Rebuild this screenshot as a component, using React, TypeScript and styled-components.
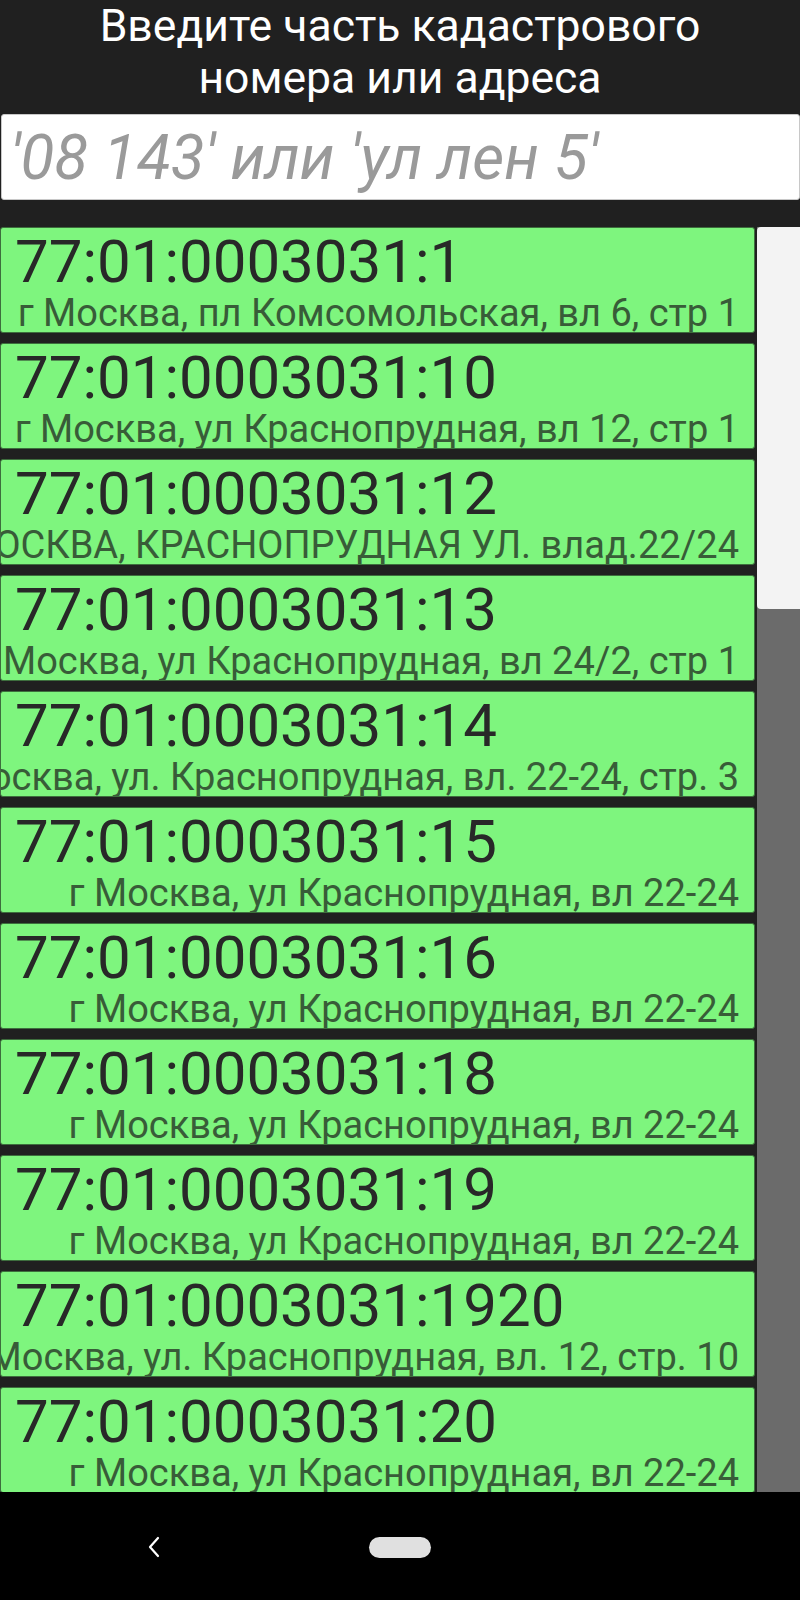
import React from "react";
import styled, { createGlobalStyle } from "styled-components";

const GlobalStyle = createGlobalStyle`
  html, body {
    margin: 0;
    padding: 0;
    background: #202020;
  }
  * { box-sizing: border-box; }
`;

const Screen = styled.div`
  width: 800px;
  height: 1600px;
  display: flex;
  flex-direction: column;
  background: #202020;
  font-family: Roboto, "Liberation Sans", sans-serif;
  overflow: hidden;
`;

const Title = styled.h1`
  margin: 0;
  padding: 0;
  height: 104px;
  color: #ffffff;
  font-weight: 400;
  font-size: 44.5px;
  line-height: 52px;
  text-align: center;
`;

const SearchBox = styled.input`
  margin: 10px 0 0 1px;
  width: 799px;
  height: 86px;
  border: 1px solid #c8c8c8;
  border-radius: 3px;
  background: #ffffff;
  padding: 0 8px;
  font-family: Roboto, "Liberation Sans", sans-serif;
  font-size: 62px;
  font-style: italic;
  color: #222;
  outline: none;
  &::placeholder {
    color: #9a9a9a;
    font-style: italic;
  }
`;

const ListArea = styled.div`
  margin-top: 27px;
  flex: 1;
  display: flex;
  gap: 2px;
  min-height: 0;
`;

const Cards = styled.div`
  width: 755px;
  display: flex;
  flex-direction: column;
  gap: 10px;
  overflow: hidden;
`;

const Card = styled.div`
  flex: 0 0 106px;
  height: 106px;
  background: #7ef57e;
  border: 1px solid #3d6e3d;
  border-radius: 3px;
  overflow: hidden;
  display: flex;
  flex-direction: column;
  padding-top: 2px;
`;

const Number = styled.div`
  padding-left: 14px;
  font-size: 60px;
  line-height: 64px;
  color: #282828;
  white-space: nowrap;
`;

const Address = styled.div`
  display: flex;
  justify-content: flex-end;
  padding-right: 15px;
  font-size: 38px;
  line-height: 38px;
  color: #385c38;
  white-space: nowrap;
`;

const Scrollbar = styled.div`
  width: 43px;
  background: #6b6b6b;
  display: flex;
  flex-direction: column;
`;

const Thumb = styled.div`
  height: 382px;
  background: #f3f3f3;
  border-radius: 4px 0 0 4px;
`;

const NavBar = styled.div`
  flex: 0 0 108px;
  height: 108px;
  background: #000000;
  position: relative;
  display: flex;
  align-items: center;
  justify-content: center;
`;

const BackButton = styled.div`
  position: absolute;
  left: 146px;
  top: 44px;
  width: 16px;
  height: 22px;
`;

const HomePill = styled.div`
  width: 62px;
  height: 21px;
  border-radius: 11px;
  background: #e0e0e0;
  margin-top: 2px;
`;

const items: [string, string][] = [
  ["77:01:0003031:1", "г Москва, пл Комсомольская, вл 6, стр 1"],
  ["77:01:0003031:10", "г Москва, ул Краснопрудная, вл 12, стр 1"],
  ["77:01:0003031:12", "г. МОСКВА, КРАСНОПРУДНАЯ УЛ. влад.22/24"],
  ["77:01:0003031:13", "Москва, ул Краснопрудная, вл 24/2, стр 1"],
  ["77:01:0003031:14", "г. Москва, ул. Краснопрудная, вл. 22-24, стр. 3"],
  ["77:01:0003031:15", "г Москва, ул Краснопрудная, вл 22-24"],
  ["77:01:0003031:16", "г Москва, ул Краснопрудная, вл 22-24"],
  ["77:01:0003031:18", "г Москва, ул Краснопрудная, вл 22-24"],
  ["77:01:0003031:19", "г Москва, ул Краснопрудная, вл 22-24"],
  ["77:01:0003031:1920", "г. Москва, ул. Краснопрудная, вл. 12, стр. 10"],
  ["77:01:0003031:20", "г Москва, ул Краснопрудная, вл 22-24"],
];

export default function App() {
  return (
    <>
      <GlobalStyle />
      <Screen>
        <Title>
          Введите часть кадастрового
          <br />
          номера или адреса
        </Title>
        <SearchBox placeholder="'08 143' или 'ул лен 5'" />
        <ListArea>
          <Cards>
            {items.map(([num, addr]) => (
              <Card key={num}>
                <Number>{num}</Number>
                <Address>
                  <span>{addr}</span>
                </Address>
              </Card>
            ))}
          </Cards>
          <Scrollbar>
            <Thumb />
          </Scrollbar>
        </ListArea>
        <NavBar>
          <BackButton>
            <svg width="16" height="22" viewBox="0 0 16 22">
              <polyline
                points="12,2 4,11 12,20"
                fill="none"
                stroke="#ffffff"
                strokeWidth="2.2"
                strokeLinecap="round"
                strokeLinejoin="round"
              />
            </svg>
          </BackButton>
          <HomePill />
        </NavBar>
      </Screen>
    </>
  );
}
